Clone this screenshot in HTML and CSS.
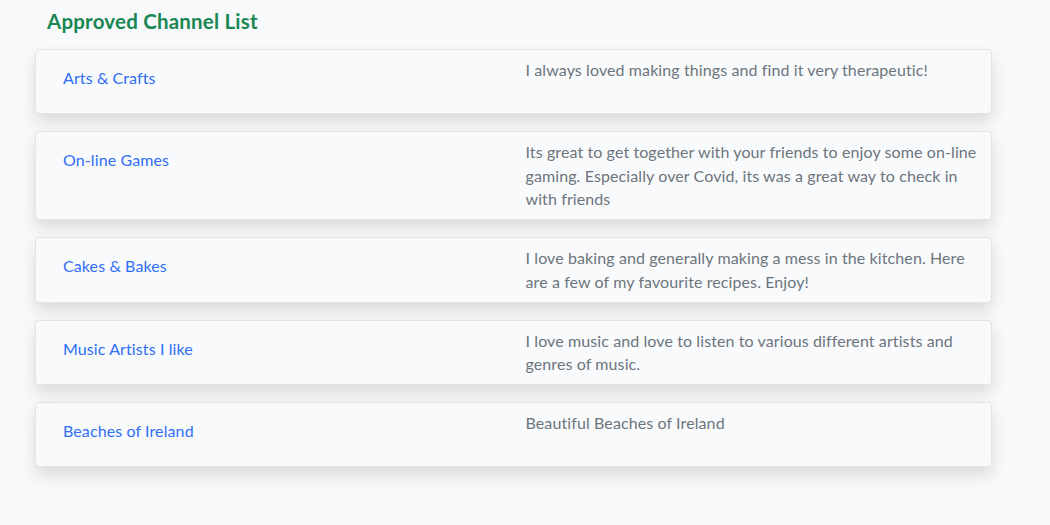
FILE: index.html
```html
<!DOCTYPE html>
<html lang="en">
<head>
<meta charset="utf-8">
<title>Approved Channel List</title>
<link rel="stylesheet" href="styles.css">
</head>
<body>
<main class="page">
  <h1 class="title">Approved Channel List</h1>
  <ul class="channels">
    <li class="card">
      <div class="col col-name"><a href="#" class="channel-link">Arts &amp; Crafts</a></div>
      <div class="col col-desc">I always loved making things and find it very therapeutic!</div>
    </li>
    <li class="card">
      <div class="col col-name"><a href="#" class="channel-link">On-line Games</a></div>
      <div class="col col-desc">Its great to get together with your friends to enjoy some on-line gaming. Especially over Covid, its was a great way to check in with friends</div>
    </li>
    <li class="card">
      <div class="col col-name"><a href="#" class="channel-link">Cakes &amp; Bakes</a></div>
      <div class="col col-desc">I love baking and generally making a mess in the kitchen. Here are a few of my favourite recipes. Enjoy!</div>
    </li>
    <li class="card">
      <div class="col col-name"><a href="#" class="channel-link">Music Artists I like</a></div>
      <div class="col col-desc">I love music and love to listen to various different artists and genres of music.</div>
    </li>
    <li class="card">
      <div class="col col-name"><a href="#" class="channel-link">Beaches of Ireland</a></div>
      <div class="col col-desc">Beautiful Beaches of Ireland</div>
    </li>
  </ul>
</main>
</body>
</html>
```

FILE: styles.css
```css
* { box-sizing: border-box; }
html, body {
  margin: 0;
  padding: 0;
  background: #f8f9fa;
  font-family: Lato, "Open Sans", "Liberation Sans", sans-serif;
  font-size: 16px;
  line-height: 24px;
  letter-spacing: 0.1px;
  color: #6c757d;
}
.page {
  width: 1050px;
  height: 525px;
  padding: 8px 0 0 35px;
}
.title {
  margin: 0 0 15px 12px;
  font-size: 20.5px;
  line-height: 26px;
  font-weight: 700;
  letter-spacing: 0.2px;
  color: #198754;
}
.channels {
  list-style: none;
  margin: 0;
  padding: 0;
  width: 957px;
  display: flex;
  flex-direction: column;
  gap: 17px;
}
.card {
  display: grid;
  grid-template-columns: 1fr 1fr;
  background: #f9fafb;
  border: 1px solid #e2e3e5;
  border-radius: 4px;
  box-shadow: 0 8px 16px rgba(0, 0, 0, 0.12);
}
.col { padding: 0 12px; }
.col-name {
  padding: 16px 12px 23px 27px;
  min-height: 63px;
}
.col-desc {
  padding-top: 8px;
  padding-bottom: 8px;
  line-height: 23.7px;
}
.channel-link {
  color: #2f6ef6;
  text-decoration: none;
}
```
